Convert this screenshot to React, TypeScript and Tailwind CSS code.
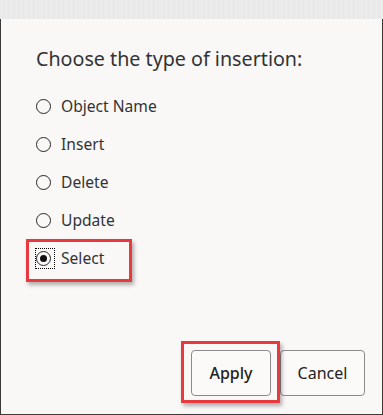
import React from "react";

const options = ["Object Name", "Insert", "Delete", "Update", "Select"];

function Radio({ checked }: { checked: boolean }) {
  return (
    <span className="flex h-[15px] w-[15px] shrink-0 items-center justify-center rounded-full border-[1.5px] border-[#262626]">
      {checked && <span className="h-[7px] w-[7px] rounded-full bg-[#111]" />}
    </span>
  );
}

export default function App() {
  return (
    <div
      className="flex h-[415px] w-[383px] flex-col bg-[#f9f8f7] text-[#333]"
      style={{ fontFamily: '"Noto Sans", "Open Sans", sans-serif' }}
    >
      <div className="h-[19px] w-full shrink-0 bg-[repeating-linear-gradient(90deg,#e6e6e6_0px,#f0f0f0_2px,#e4e4e4_3px,#eeeeee_5px)]" />
      <div className="flex flex-1 flex-col border-x border-b border-[#3a3a3a] pl-[35px] pr-[17px] pb-[18px]">
        <div className="mt-[26px] h-[28px] text-[19.7px] leading-[28px] text-[#333]">
          Choose the type of insertion:
        </div>
        <div className="mt-[14px] flex flex-col">
          {options.map((o) => {
            const checked = o === "Select";
            return (
              <div key={o} className="relative flex h-[38px] items-center">
                {checked && (
                  <>
                    <span className="pointer-events-none absolute left-[-10px] top-[0px] h-[43px] w-[106px] border-[3px] border-[#e8393f] shadow-[2px_3px_4px_rgba(0,0,0,0.3)]" />
                    <span className="pointer-events-none absolute left-[-1px] top-[9px] h-[21px] w-[20px] border border-dotted border-black" />
                  </>
                )}
                <Radio checked={checked} />
                <span className="ml-[10px] text-[15.6px] leading-[20px] text-[#333]">{o}</span>
              </div>
            );
          })}
        </div>
        <div className="mt-auto flex justify-end gap-[9px]">
          <div className="relative">
            <span className="pointer-events-none absolute left-[-10px] top-[-9px] h-[62px] w-[99px] border-[3px] border-[#e8393f] shadow-[2px_3px_4px_rgba(0,0,0,0.3)]" />
            <button className="h-[46px] w-[80px] rounded-[4px] border border-[#8a8a8a] bg-[#fbfaf9] text-[16px] font-medium text-[#222]">
              Apply
            </button>
          </div>
          <button className="h-[46px] w-[85px] rounded-[4px] border border-[#8a8a8a] bg-[#fbfaf9] text-[16px] text-[#222]">
            Cancel
          </button>
        </div>
      </div>
    </div>
  );
}
